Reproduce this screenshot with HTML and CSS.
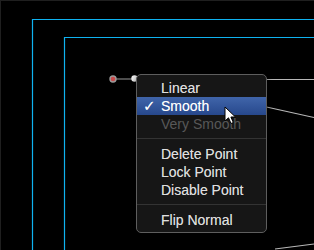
FILE: index.html
```html
<!DOCTYPE html>
<html lang="en">
  <head>
    <meta charset="UTF-8" />
    <title>Shape menu</title>
    <link rel="stylesheet" href="styles.css">
  </head>
  <body>
    <div class="canvas">
      <!-- shape outlines and control points -->
      <svg class="shapes" width="313" height="249" viewBox="1 1 313 249">
        <path d="M32.5 250 V19.5 H314" class="guide" />
        <path d="M64.5 250 V37.5 H314" class="guide" />
        <path d="M260 79.5 H314" class="edge" />
        <path d="M262 106 L314 117.5" class="edge" />
        <path d="M275 249 L314 244" class="edge" />
        <line x1="116" y1="79" x2="134" y2="79" class="tangent" />
        <circle cx="113" cy="79" r="3" class="point" />
        <circle cx="134.5" cy="78.5" r="3.2" class="knob" />
      </svg>

      <div class="menu">
        <div class="item">Linear</div>
        <div class="item selected"><span class="check">✓</span>Smooth</div>
        <div class="item disabled">Very Smooth</div>
        <div class="sep"></div>
        <div class="item">Delete Point</div>
        <div class="item">Lock Point</div>
        <div class="item">Disable Point</div>
        <div class="sep"></div>
        <div class="item">Flip Normal</div>
      </div>

      <svg class="cursor" width="13" height="20" viewBox="0 0 13 20">
        <path d="M1 1 L1 15 L4.5 11.8 L7 17.5 L9.3 16.5 L6.9 11 L11.5 11 Z" fill="#fff" stroke="#000" stroke-width="1" stroke-linejoin="round" />
      </svg>
    </div>
  </body>
</html>
```

FILE: styles.css
```css
* {
  margin: 0;
  padding: 0;
  box-sizing: border-box;
}

body {
  background: #000;
  font-family: "Liberation Sans", Arial, sans-serif;
}

.canvas {
  position: relative;
  width: 314px;
  height: 250px;
  overflow: hidden;
  background: #000;
  border-top: 1px solid #1f1f1f;
  border-left: 1px solid #1f1f1f;
}

.shapes {
  position: absolute;
  left: 0;
  top: 0;
}

.guide {
  fill: none;
  stroke: #0fb2f0;
  stroke-width: 1.2;
}

.edge {
  fill: none;
  stroke: #b8b8b8;
  stroke-width: 1.2;
}

.tangent {
  stroke: #9a9a9a;
  stroke-width: 1;
}

.point {
  fill: #c9494a;
  stroke: #9a9a9a;
  stroke-width: 1.4;
}

.knob {
  fill: #f2f2f2;
}

/* context menu */
.menu {
  position: absolute;
  left: 135px;
  top: 73px;
  width: 131px;
  padding: 4px 0 3px;
  background: #161616;
  border: 1px solid #5e5e5e;
  border-radius: 5px;
  box-shadow: 0 2px 6px rgba(0, 0, 0, 0.6);
}

.item {
  position: relative;
  height: 18px;
  line-height: 18px;
  padding-left: 24px;
  font-size: 14px;
  color: #dedede;
  white-space: nowrap;
  text-shadow: 0 0 0.4px rgba(222, 222, 222, 0.6);
}

.item.selected {
  background: linear-gradient(#4065aa, #27488c);
  color: #fff;
}

.item.disabled {
  color: #585858;
  text-shadow: none;
}

.check {
  position: absolute;
  left: 6px;
  top: 0;
  font-family: "DejaVu Sans", sans-serif;
  font-size: 15px;
  font-weight: bold;
}

.sep {
  height: 1px;
  margin: 5px 0 6px;
  background: #333;
}

.cursor {
  position: absolute;
  left: 223px;
  top: 105px;
}
```
